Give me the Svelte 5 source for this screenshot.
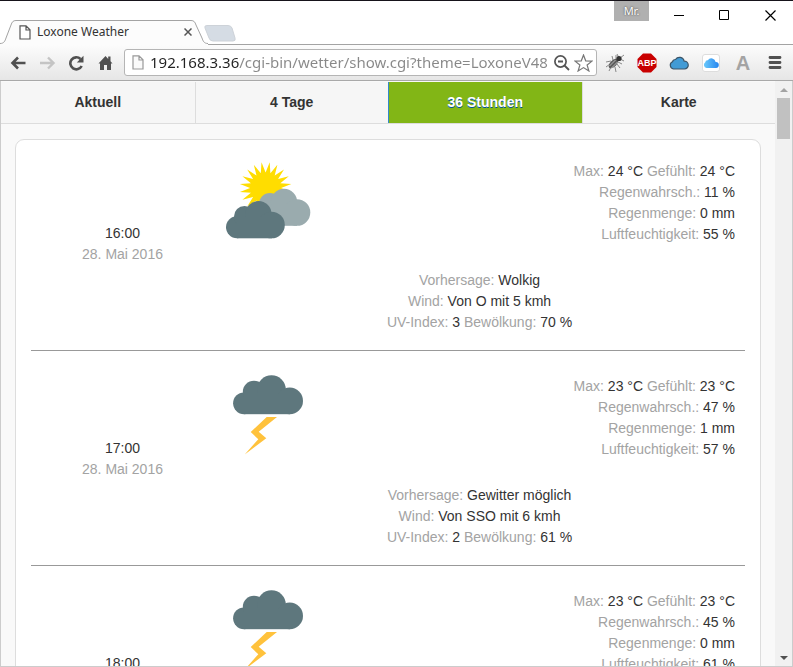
<script lang="ts">
    interface Hour {
        time: string;
        date: string;
        icon: string;
        temp: number;
        feels: number;
        pop: number;
        rain: number;
        humidity: number;
        forecast: string;
        wind: string;
        uv: number;
        clouds: number;
    }

    const tabs = ['Aktuell', '4 Tage', '36 Stunden', 'Karte'];
    let active = $state('36 Stunden');
    let url = $state('192.168.3.36/cgi-bin/wetter/show.cgi?theme=LoxoneV48');

    const hours: Hour[] = [
        {time: '16:00', date: '28. Mai 2016', icon: 'cloudy', temp: 24, feels: 24, pop: 11, rain: 0, humidity: 55, forecast: 'Wolkig', wind: 'Von O mit 5 kmh', uv: 3, clouds: 70},
        {time: '17:00', date: '28. Mai 2016', icon: 'storm', temp: 23, feels: 23, pop: 47, rain: 1, humidity: 57, forecast: 'Gewitter möglich', wind: 'Von SSO mit 6 kmh', uv: 2, clouds: 61},
        {time: '18:00', date: '28. Mai 2016', icon: 'storm', temp: 23, feels: 23, pop: 45, rain: 0, humidity: 61, forecast: 'Gewitter möglich', wind: 'Von SSO mit 6 kmh', uv: 1, clouds: 60},
    ];

    // sun with 20 spikes
    const rays = Array.from({length: 40}, (_, i) => {
        const r = i % 2 ? 15.5 : 26;
        const a = ((i + 1) * Math.PI) / 20;
        return `${(41.6 + r * Math.cos(a)).toFixed(1)},${(27 + r * Math.sin(a)).toFixed(1)}`;
    }).join(' ');
</script>

<div class="window">
    <header class="titlebar">
        <div class="tab">
            <svg class="tab-shape" viewBox="0 0 208 25" aria-hidden="true">
                <path d="M0 23.500C4 23.500 5 21 6 18L11 5C12 2 13 .5 16 .5H191C194 .5 195 2 196 5L202 18C203 21 204 23.500 208 23.500V25H0Z" fill="#fcfcfc"/>
                <path d="M0 23.500C4 23.500 5 21 6 18L11 5C12 2 13 .5 16 .5H191C194 .5 195 2 196 5L202 18C203 21 204 23.500 208 23.500" fill="none" stroke="#a3a3a3"/>
            </svg>
            <svg class="page-icon" viewBox="0 0 12 15" aria-hidden="true">
                <path d="M1 .8H7L11 4.800V14H1ZM7 .8V5H11" fill="#fff" stroke="#555" stroke-width="1.200"/>
            </svg>
            <span class="tab-title">Loxone Weather</span>
            <button class="tab-close" aria-label="Tab schließen">
                <svg width="8" height="8" viewBox="0 0 8 8"><path d="M.5.5L7.500 7.500M7.500.5L.5 7.500" stroke="#555" stroke-width="1.500"/></svg>
            </button>
        </div>
        <button class="new-tab" aria-label="Neuer Tab">
            <svg width="32" height="17" viewBox="0 0 32 17"><path d="M3 .5H24Q27 .5 28 3L31 13Q32 16 29 16H9Q6 16 5 13L1 3Q0 .5 3 .5Z" fill="#d5dce4" stroke="#cdd2d8"/></svg>
        </button>
        <div class="window-buttons">
            <button class="user">Mr.</button>
            <button aria-label="Minimieren"><svg width="11" height="11" viewBox="0 0 11 11"><path d="M1 5.500H11" stroke="#000"/></svg></button>
            <button aria-label="Maximieren"><svg width="11" height="11" viewBox="0 0 11 11"><path d="M.5.5H9.500V9.500H.5Z" fill="none" stroke="#000"/></svg></button>
            <button aria-label="Schließen"><svg width="11" height="11" viewBox="0 0 11 11"><path d="M.5.5L10.500 10.500M10.500.5L.5 10.500" stroke="#000" stroke-width="1.200"/></svg></button>
        </div>
    </header>

    <div class="toolbar">
        <div class="nav-buttons">
            <button aria-label="Zurück"><svg width="17" height="16" viewBox="0 0 17 16"><path d="M15.500 8H3M8 2.500L2.500 8L8 13.500" fill="none" stroke="#505050" stroke-width="2.600"/></svg></button>
            <button aria-label="Vorwärts" disabled><svg width="17" height="16" viewBox="0 0 17 16"><path d="M1 8H14M9 2.500L14.500 8L9 13.500" fill="none" stroke="#c4c4c4" stroke-width="2.400"/></svg></button>
            <button aria-label="Neu laden"><svg width="17" height="16" viewBox="0 0 17 16"><path d="M13.700 11A6 6 0 1 1 12.500 4" fill="none" stroke="#505050" stroke-width="2.600"/><path d="M15.500 .8V7.500H8.800Z" fill="#505050"/></svg></button>
            <button aria-label="Startseite"><svg width="17" height="16" viewBox="0 0 17 16"><path d="M8.500 1L1.500 8.500H3V15H7V10H10V15H14V8.500H15.500L13.500 6.300V1.500H11.200V3.900Z" fill="#505050"/></svg></button>
        </div>
        <div class="omnibox">
            <svg width="12" height="15" viewBox="0 0 12 15" aria-hidden="true">
                <path d="M1 .8H7L11 4.800V14H1ZM7 .8V5H11" fill="#fafafa" stroke="#999" stroke-width="1.200"/>
            </svg>
            <input type="text" aria-label="Adresse" bind:value={url}/>
            <button aria-label="Zoom"><svg width="16" height="16" viewBox="0 0 16 16"><circle cx="6.500" cy="6.500" r="5.600" fill="none" stroke="#555" stroke-width="1.700"/><path d="M4 6.500H9M10.500 10.500L15 15" stroke="#555" stroke-width="1.800"/></svg></button>
            <button aria-label="Lesezeichen"><svg width="19" height="18" viewBox="0 0 19 18"><path d="M9.500 1L11.700 6.800L18 7.100L13.100 11L14.900 17L9.500 13.600L4.100 17L5.900 11L1 7.100L7.300 6.800Z" fill="#fff" stroke="#777" stroke-width="1.200"/></svg></button>
        </div>
        <div class="extensions">
            <button aria-label="Bug">
                <svg width="20" height="20" viewBox="0 0 20 20">
                    <path d="M6 8L1 9M5 11L1 14M6 14L4 18M10 14L11 19M8 7L7 3M11 6L11 2M13 9L17 11M12 11L15 15M15 5L19 2M14 5L12 1M15 6L19 8" stroke="#888" fill="none"/>
                    <ellipse cx="8.500" cy="10.500" rx="6" ry="3.200" transform="rotate(-45 8.500 10.500)" fill="#5c5c5c"/>
                    <path d="M4.500 13L10.500 7M6.500 15L12.500 9" stroke="#b5b5b5"/>
                    <circle cx="14" cy="5.500" r="2.600" fill="#333"/>
                </svg>
            </button>
            <button aria-label="Adblock Plus">
                <svg width="20" height="20" viewBox="0 0 20 20">
                    <path d="M6 .5H14L19.500 6V14L14 19.500H6L.5 14V6Z" fill="#c90000"/>
                    <text x="10" y="13" text-anchor="middle" font-size="9" font-weight="700" fill="#fff">ABP</text>
                </svg>
            </button>
            <button aria-label="Cloud">
                <svg width="20" height="14" viewBox="0 0 20 14"><path d="M4.500 13A3.800 3.800 0 0 1 3.500 5.800A3 3 0 0 1 6.500 3.500A4.800 4.800 0 0 1 15.200 5.200A3.900 3.900 0 0 1 15.500 13Z" fill="#429bd5" stroke="#3c5568" stroke-width="1.200"/></svg>
            </button>
            <button aria-label="iCloud">
                <svg width="18" height="18" viewBox="0 0 18 18">
                    <defs><linearGradient id="icloud" x2="1"><stop offset="0" stop-color="#6ac9fb"/><stop offset="1" stop-color="#2585ef"/></linearGradient></defs>
                    <rect x=".5" y=".5" width="17" height="17" rx="2.500" fill="#fff" stroke="#ddd"/>
                    <path d="M4.500 14A3.200 3.200 0 0 1 3.300 8.200A2.300 2.300 0 0 1 5.800 6.200A4.300 4.300 0 0 1 13.600 8A3 3 0 0 1 14 14Z" fill="url(#icloud)"/>
                </svg>
            </button>
            <button class="letter">A</button>
            <button aria-label="Menü"><svg width="14" height="13" viewBox="0 0 14 13"><path d="M2 1.500H12M2 6.500H12M2 11.500H12" stroke="#505050" stroke-width="2.800" stroke-linecap="round"/></svg></button>
        </div>
    </div>

    <div class="viewport">
        <main>
            <nav>
                {#each tabs as tab}
                    <a href="#{tab}" class:active={active === tab} onclick={() => (active = tab)}>{tab}</a>
                {/each}
            </nav>
            <section class="card">
                {#each hours as hour, i}
                    {#if i > 0}<hr/>{/if}
                    <article>
                        <div class="when">
                            <div>{hour.time}</div>
                            <div class="label">{hour.date}</div>
                        </div>
                        <div class="weather">
                            <div class="top">
                                <svg class="icon" viewBox="0 0 88 84" role="img" aria-label={hour.forecast}>
                                    {#if hour.icon === 'cloudy'}
                                        <polygon points={rays} fill="#fd0"/>
                                        <g fill="#9aabae">
                                            <circle cx="46" cy="43" r="11"/>
                                            <circle cx="60" cy="41" r="13.200"/>
                                            <circle cx="73" cy="51.500" r="13.300"/>
                                            <rect x="40" y="45" width="33" height="19.800"/>
                                        </g>
                                        <g fill="#5e777d">
                                            <circle cx="13" cy="66.300" r="11"/>
                                            <circle cx="20.500" cy="55.500" r="10.500"/>
                                            <circle cx="34.500" cy="53" r="13"/>
                                            <circle cx="47.500" cy="64" r="13.300"/>
                                            <rect x="13" y="56" width="35" height="21.300"/>
                                        </g>
                                    {:else}
                                        <g fill="#5e777d">
                                            <circle cx="20" cy="27.300" r="10.900"/>
                                            <circle cx="30" cy="16" r="11.200"/>
                                            <circle cx="47.500" cy="13.500" r="14.300"/>
                                            <circle cx="65.700" cy="24.900" r="13.300"/>
                                            <rect x="20" y="18" width="46" height="20.200"/>
                                        </g>
                                        <path d="M42.700 41H53L34.700 55.700L42.300 62.300L20.700 78.500L34.300 63.300L26.700 56Z" fill="#ffc23c"/>
                                    {/if}
                                </svg>
                                <div class="stats">
                                    <div><span class="label">Max:</span> {hour.temp} °C <span class="label">Gefühlt:</span> {hour.feels} °C</div>
                                    <div><span class="label">Regenwahrsch.:</span> {hour.pop} %</div>
                                    <div><span class="label">Regenmenge:</span> {hour.rain} mm</div>
                                    <div><span class="label">Luftfeuchtigkeit:</span> {hour.humidity} %</div>
                                </div>
                            </div>
                            <div class="details">
                                <div><span class="label">Vorhersage:</span> {hour.forecast}</div>
                                <div><span class="label">Wind:</span> {hour.wind}</div>
                                <div><span class="label">UV-Index:</span> {hour.uv} <span class="label">Bewölkung:</span> {hour.clouds} %</div>
                            </div>
                        </div>
                    </article>
                {/each}
            </section>
        </main>
        <div class="scrollbar">
            <button aria-label="Nach oben"><svg width="8" height="4" viewBox="0 0 8 4"><path d="M0 4L4 0L8 4Z" fill="#a3a3a3"/></svg></button>
            <div class="track"><div class="thumb"></div></div>
            <button aria-label="Nach unten"><svg width="8" height="4" viewBox="0 0 8 4"><path d="M0 0L4 4L8 0Z" fill="#505050"/></svg></button>
        </div>
    </div>
</div>

<style>
    :global(body) {
        margin: 0;
        overflow: hidden;
    }

    .window {
        display: flex;
        flex-direction: column;
        box-sizing: border-box;
        height: 100vh;
        border-top: 1px solid #16131a;
        background: #fff;
        color: #333;
        font-family: "Liberation Sans", Arial, sans-serif;
        font-size: 14px;
        line-height: 21px;
    }

    button {
        display: flex;
        align-items: center;
        justify-content: center;
        padding: 0;
        border: 0;
        background: none;
    }

    svg {
        display: block;
        flex: none;
    }

    .titlebar {
        display: flex;
        align-items: flex-end;
        height: 43px;
        border-bottom: 1px solid #a3a3a3;
    }

    .tab {
        position: relative;
        display: flex;
        align-items: center;
        box-sizing: border-box;
        width: 208px;
        height: 24px;
        padding: 0 16px 0 19px;
    }

    .tab-shape {
        position: absolute;
        left: 0;
        top: 0;
        width: 208px;
        height: 25px;
    }

    .page-icon {
        position: relative;
        width: 12px;
        height: 15px;
    }

    .tab-title {
        position: relative;
        flex: 1;
        margin-left: 6px;
        font: 12px/16px "Noto Sans", "Open Sans", sans-serif;
    }

    .tab-close {
        position: relative;
    }

    .new-tab {
        margin: 0 0 2px -4px;
    }

    .window-buttons {
        display: flex;
        align-self: flex-start;
        margin-left: auto;
    }

    .window-buttons button {
        width: 46px;
        height: 28px;
    }

    .window-buttons .user {
        width: 35px;
        height: 20px;
        margin-right: 6px;
        background: #b0b0b0;
        color: #fff;
        font: 11px/20px "Noto Sans", sans-serif;
        text-shadow: 0 0 2px #333;
    }

    .toolbar {
        display: flex;
        align-items: center;
        height: 35px;
        padding: 0 2px 0 4px;
        border-bottom: 1px solid #a9a9a9;
        background: linear-gradient(#fcfcfc, #e6e6e6);
    }

    .nav-buttons {
        display: flex;
    }

    .nav-buttons button {
        width: 29px;
        height: 24px;
    }

    .omnibox {
        display: flex;
        flex: 1;
        align-items: center;
        gap: 4px;
        min-width: 0;
        height: 25px;
        margin-left: 4px;
        padding: 0 3px 0 7px;
        border: 1px solid #b5b5b5;
        border-radius: 3px;
        background: #fff;
    }

    /* host part dark, path grey */
    .omnibox input {
        flex: 1;
        min-width: 0;
        height: 23px;
        margin-right: -4px;
        padding: 0 0 0 2px;
        border: 0;
        outline: 0;
        background: linear-gradient(to right, #222 91px, #888 91px);
        -webkit-background-clip: text;
        background-clip: text;
        -webkit-text-fill-color: transparent;
        color: #888;
        font: 15px/23px "Noto Sans", "Open Sans", sans-serif;
    }

    .extensions {
        display: flex;
        margin-left: 2px;
    }

    .extensions button {
        width: 32px;
        height: 24px;
    }

    .extensions text {
        font-family: "Liberation Sans", Arial, sans-serif;
    }

    .extensions .letter {
        color: #a3a3a3;
        font: bold 20px/24px "Liberation Sans", Arial, sans-serif;
    }

    .viewport {
        display: flex;
        flex: 1;
        min-height: 0;
        border: 1px solid #ccc;
        border-top: 0;
    }

    main {
        flex: 1;
        min-width: 0;
        overflow: hidden;
        background: #f9f9f9;
    }

    nav {
        display: grid;
        grid-template-columns: repeat(4, 1fr);
        margin-top: 1px;
        border-bottom: 1px solid #ddd;
    }

    nav a {
        padding: 10px 0;
        border-left: 1px solid #ddd;
        background: #f6f6f6;
        color: #333;
        font-weight: 700;
        text-align: center;
        text-decoration: none;
        text-shadow: 0 1px 0 #f3f3f3;
    }

    nav a:first-child {
        border-left: 0;
    }

    nav a.active {
        border-color: #38c;
        background: #82b616;
        color: #fff;
        text-shadow: 0 1px 0 #059;
    }

    .card {
        margin: 15px 14px;
        padding: 21px 15px;
        border: 1px solid #ddd;
        border-radius: 9px;
        background: #fff;
    }

    article {
        display: grid;
        grid-template-columns: 26% 1fr;
        column-gap: 10px;
        padding-right: 10px;
    }

    hr {
        height: 1px;
        margin: 17px 0 25px;
        border: 0;
        background: #999;
    }

    .when {
        padding-top: 62px;
        text-align: center;
    }

    .label {
        color: #a3a3a3;
    }

    .top {
        display: flex;
        justify-content: space-between;
    }

    .icon {
        width: 88px;
        height: 84px;
        overflow: visible;
    }

    .stats {
        text-align: right;
    }

    .details {
        margin-top: 25px;
        text-align: center;
    }

    .scrollbar {
        display: flex;
        flex-direction: column;
        width: 17px;
        background: #f1f1f1;
    }

    .scrollbar button {
        height: 17px;
    }

    .track {
        flex: 1;
    }

    .thumb {
        height: 41px;
        margin: 0 2px;
        background: #c1c1c1;
    }
</style>
